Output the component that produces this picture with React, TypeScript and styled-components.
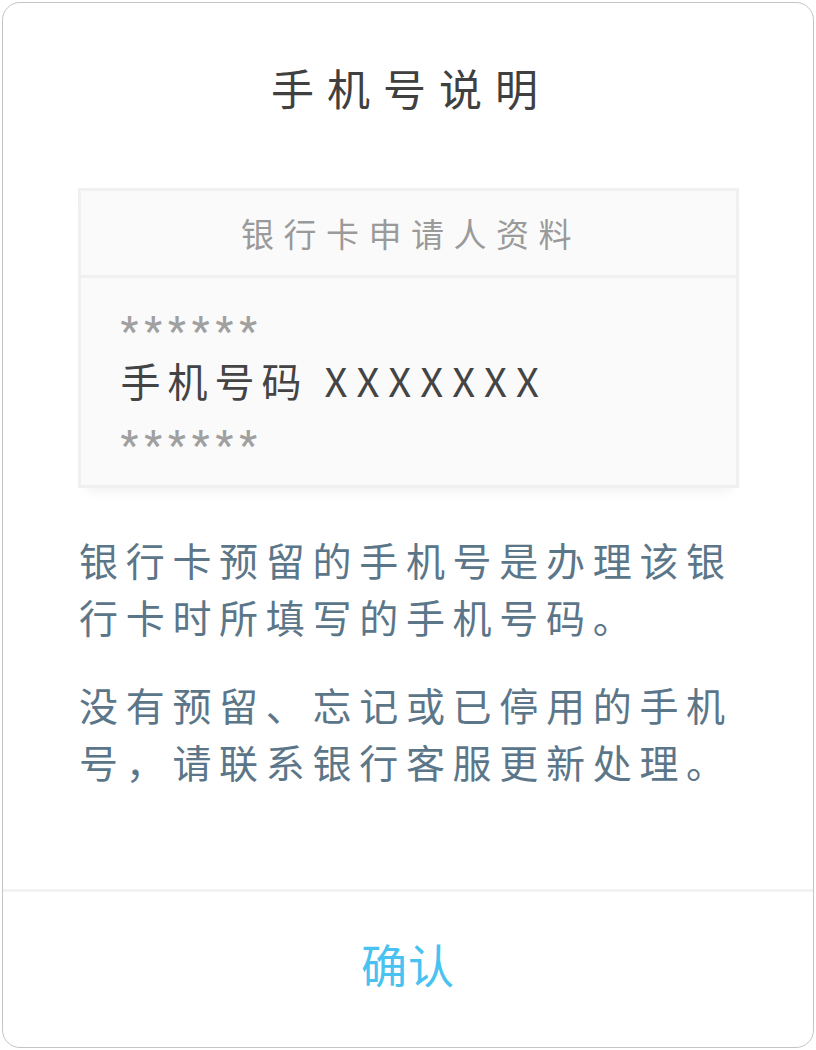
import React from 'react';
import styled, { createGlobalStyle } from 'styled-components';

const GlobalStyle = createGlobalStyle`
  * {
    box-sizing: border-box;
  }
  body {
    margin: 0;
    background: #ffffff;
    font-family: 'Noto Sans CJK SC', 'Noto Sans', sans-serif;
  }
`;

// 弹窗外框
const Dialog = styled.div`
  margin: 2px;
  width: 812px;
  height: 1046px;
  border: 1.5px solid #c4c4c4;
  border-radius: 18px;
  background: #ffffff;
  display: flex;
  flex-direction: column;
  overflow: hidden;
`;

const Title = styled.h1`
  margin: 56px 0 0;
  font-size: 43px;
  font-weight: 400;
  line-height: 56px;
  letter-spacing: 13px;
  color: #404040;
  text-align: center;
  padding-left: 6px;
`;

const InfoCard = styled.div`
  margin: 73px 74.5px 0;
  border: 3px solid #f0f0f0;
  background: #fafafa;
  box-shadow: 0 10px 12px -8px rgba(0, 0, 0, 0.07);
`;

const CardHeader = styled.div`
  height: 87px;
  display: flex;
  align-items: center;
  justify-content: center;
  border-bottom: 3px solid #f0f0f0;
  font-size: 33px;
  letter-spacing: 9.5px;
  padding-left: 6px;
  color: #9a9a9a;
`;

const CardBody = styled.div`
  padding: 17px 40px 20px;
  display: flex;
  flex-direction: column;
`;

// 星号行：字形偏上，用上内边距压到行中
const Masked = styled.div`
  height: 56px;
  padding-top: 18px;
  line-height: 38px;
  font-family: Roboto, 'Noto Sans', sans-serif;
  font-size: 40px;
  font-weight: 500;
  letter-spacing: 6px;
  color: #a0a0a0;
`;

const PhoneLine = styled.div`
  height: 58px;
  line-height: 58px;
  font-size: 40px;
  letter-spacing: 7px;
  color: #444444;
`;

const Digits = styled.span<{ spacing: number }>`
  letter-spacing: ${props => props.spacing}px;
`;

const Notes = styled.div`
  margin-top: 43px;
  padding: 0 68px 0 76px;
  display: flex;
  flex-direction: column;
  gap: 31px;
`;

const Note = styled.p`
  margin: 0;
  font-size: 39px;
  line-height: 57px;
  letter-spacing: 7.7px;
  color: #5c7689;
`;

const Spacer = styled.div`
  flex: 1;
`;

const Footer = styled.div`
  height: 158px;
  padding-bottom: 14px;
  border-top: 3px solid #f2f2f2;
  display: flex;
  align-items: center;
  justify-content: center;
`;

const ConfirmButton = styled.button`
  border: none;
  background: transparent;
  padding: 0;
  font-family: inherit;
  font-size: 46px;
  letter-spacing: 1px;
  color: #48c2f1;
  cursor: pointer;
`;

const notes = [
  '银行卡预留的手机号是办理该银行卡时所填写的手机号码。',
  '没有预留、忘记或已停用的手机号，请联系银行客服更新处理。',
];

export default function App() {
  return (
    <>
      <GlobalStyle />
      <Dialog>
        <Title>手机号说明</Title>
        <InfoCard>
          <CardHeader>银行卡申请人资料</CardHeader>
          <CardBody>
            <Masked>******</Masked>
            <PhoneLine>
              手机号码 <Digits spacing={9}>XXXXXXX</Digits>
            </PhoneLine>
            <Masked>******</Masked>
          </CardBody>
        </InfoCard>
        <Notes>
          {notes.map((text, i) => (
            <Note key={i}>{text}</Note>
          ))}
        </Notes>
        <Spacer />
        <Footer>
          <ConfirmButton>确认</ConfirmButton>
        </Footer>
      </Dialog>
    </>
  );
}
